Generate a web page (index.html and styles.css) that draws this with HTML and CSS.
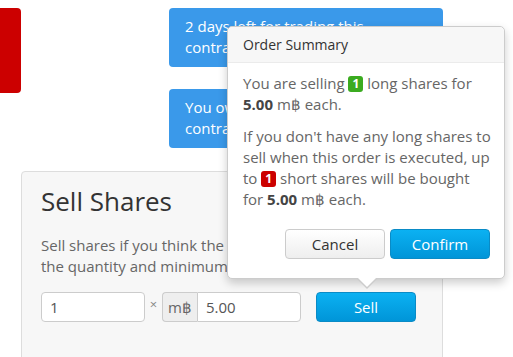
FILE: index.html
```html
<!DOCTYPE html>
<html lang="en">
<head>
    <meta charset="UTF-8">
    <title>Sell Shares</title>
    <link rel="stylesheet" href="styles.css">
</head>
<body>
    <div class="page">
        <div class="top-row">
            <div class="flag"></div>
            <div class="alerts">
                <div class="alert">2 days left for trading this contract.</div>
                <div class="alert">You own no shares of this contract.</div>
            </div>
        </div>

        <div class="panel">
            <h2>Sell Shares</h2>
            <p>Sell shares if you think the contract will expire. Enter the quantity and minimum price.</p>
            <div class="order-row">
                <input type="text" class="qty" value="1">
                <span class="times">×</span>
                <div class="input-group">
                    <span class="addon">m฿</span>
                    <input type="text" class="price" value="5.00">
                </div>
                <button class="btn btn-primary sell">Sell</button>
            </div>
        </div>

        <div class="popover">
            <div class="popover-title">Order Summary</div>
            <div class="popover-content">
                <p>You are selling <span class="badge green">1</span> long shares for <strong>5.00</strong> m฿ each.</p>
                <p>If you don't have any long shares to sell when this order is executed, up to <span class="badge red">1</span> short shares will be bought for <strong>5.00</strong> m฿ each.</p>
                <div class="actions">
                    <button class="btn btn-default">Cancel</button>
                    <button class="btn btn-primary">Confirm</button>
                </div>
            </div>
            <div class="arrow"></div>
        </div>
    </div>
</body>
</html>
```

FILE: styles.css
```css
body {
    margin: 0;
    font-family: "Open Sans", sans-serif;
    font-size: 15px;
    line-height: 21px;
    color: #666;
    background: #fff;
}
.page {
    position: relative;
    padding-top: 8px;
}
.top-row {
    display: flex;
    gap: 148px;
}
.flag {
    width: 21px;
    height: 85px;
    background: #cc0000;
    border-radius: 0 4px 4px 0;
}
.alerts {
    width: 274px;
    display: flex;
    flex-direction: column;
    gap: 22px;
}
.alert {
    background: #3a99ea;
    color: #fff;
    font-size: 15px;
    line-height: 21px;
    padding: 8px 16px 9px;
    border-radius: 4px;
    height: 42px;
    overflow: hidden;
}
.panel {
    margin: 23px 0 0 21px;
    width: 401px;
    height: 200px;
    padding: 0 0 0 19px;
    background: #f7f7f7;
    border: 1px solid #ddd;
    border-radius: 4px;
}
.panel h2 {
    margin: 11px 0 16px;
    font-size: 26px;
    font-weight: normal;
    line-height: 36px;
    color: #333;
}
.panel p {
    margin: 0 0 15px;
    width: 380px;
}
.order-row {
    display: flex;
    align-items: center;
}
input {
    font-family: "Open Sans", sans-serif;
    font-size: 15px;
    color: #555;
    height: 30px;
    box-sizing: border-box;
    border: 1px solid #ccc;
    background: #fff;
    padding: 0 8px;
    outline: none;
}
.qty {
    width: 104px;
    border-radius: 4px;
}
.times {
    width: 17px;
    text-align: center;
    font-size: 13px;
    color: #888;
    align-self: flex-start;
    line-height: 24px;
}
.input-group {
    display: flex;
}
.addon {
    height: 30px;
    box-sizing: border-box;
    width: 35px;
    background: #eee;
    border: 1px solid #ccc;
    border-right: none;
    border-radius: 4px 0 0 4px;
    text-align: center;
    line-height: 28px;
    color: #666;
}
.price {
    width: 104px;
    border-radius: 0 4px 4px 0;
}
.btn {
    font-family: "Open Sans", sans-serif;
    font-size: 15px;
    height: 30px;
    width: 100px;
    border-radius: 4px;
    cursor: pointer;
}
.btn-primary {
    color: #fff;
    background: linear-gradient(#0bb1f2, #0095d8);
    border: 1px solid #0a8bc6;
}
.btn-default {
    color: #333;
    background: linear-gradient(#fff, #eee);
    border: 1px solid #ccc;
}
.sell {
    margin-left: 15px;
}
.popover {
    position: absolute;
    left: 227px;
    top: 26px;
    width: 276px;
    background: #fff;
    border: 1px solid #ccc;
    border-radius: 5px;
    box-shadow: 0 4px 10px rgba(0, 0, 0, 0.2);
}
.popover-title {
    background: #f7f7f7;
    border-bottom: 1px solid #ebebeb;
    border-radius: 5px 5px 0 0;
    padding: 7px 15px;
    color: #333;
    font-size: 14px;
    line-height: 21px;
}
.popover-content {
    padding: 10px 14px 19px 15px;
}
.popover-content p {
    margin: 0 -2px 11px 0;
}
.popover-content strong {
    color: #444;
}
.badge {
    display: inline-block;
    color: #fff;
    font-weight: bold;
    font-size: 12px;
    line-height: 16px;
    padding: 0 4px;
    border-radius: 3px;
    vertical-align: 1px;
}
.green {
    background: #3bab20;
}
.red {
    background: #cc0000;
}
.actions {
    display: flex;
    justify-content: flex-end;
    gap: 5px;
    margin-top: 19px;
}
.arrow {
    position: absolute;
    left: 128px;
    bottom: -11px;
    width: 0;
    height: 0;
    border-left: 11px solid transparent;
    border-right: 11px solid transparent;
    border-top: 11px solid #ccc;
}
.arrow::after {
    content: "";
    position: absolute;
    left: -10px;
    top: -12px;
    border-left: 10px solid transparent;
    border-right: 10px solid transparent;
    border-top: 10px solid #fff;
}
```
